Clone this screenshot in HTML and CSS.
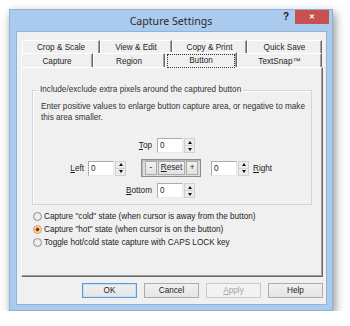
FILE: index.html
```html
<!DOCTYPE html>
<html>
<head>
<meta charset="utf-8">
<link rel="stylesheet" href="styles.css">
</head>
<body>
<div class="window">
  <div class="titlebar">
    <div></div>
    <div class="title">Capture Settings</div>
    <div class="controls">
      <div class="help">?</div>
      <div class="close">&#x2715;</div>
    </div>
  </div>
  <div class="client">
    <div class="tabs">
      <div class="tabrow row1">
        <div class="tab t78">Crop &amp; Scale</div>
        <div class="tab t72">View &amp; Edit</div>
        <div class="tab t75">Copy &amp; Print</div>
        <div class="tab t75">Quick Save</div>
      </div>
      <div class="tabrow row2">
        <div class="tab t72">Capture</div>
        <div class="tab t72">Region</div>
        <div class="tab t72 selected"><span class="focus">Button</span></div>
        <div class="tab t85">TextSnap&trade;</div>
      </div>
    </div>
    <div class="panel">
      <fieldset class="group">
        <legend>Include/exclude extra pixels around the captured button</legend>
        <p class="desc">Enter positive values to enlarge button capture area, or negative to make this area smaller.</p>
        <div class="spinrow toprow">
          <span class="lbl lbl-top"><u>T</u>op</span>
          <div class="spin"><div class="spin-box">0</div><div class="spin-btns"><span class="sb up"></span><span class="sb down"></span></div></div>
        </div>
        <div class="spinrow midrow">
          <span class="lbl lbl-left"><u>L</u>eft</span>
          <div class="spin"><div class="spin-box">0</div><div class="spin-btns"><span class="sb up"></span><span class="sb down"></span></div></div>
          <div class="resetgroup">
            <div class="rbtn rminus">-</div>
            <div class="rbtn rreset"><u>R</u>eset</div>
            <div class="rbtn rplus">+</div>
          </div>
          <div class="spin"><div class="spin-box">0</div><div class="spin-btns"><span class="sb up"></span><span class="sb down"></span></div></div>
          <span class="lbl lbl-right"><u>R</u>ight</span>
        </div>
        <div class="spinrow botrow">
          <span class="lbl lbl-top"><u>B</u>ottom</span>
          <div class="spin"><div class="spin-box">0</div><div class="spin-btns"><span class="sb up"></span><span class="sb down"></span></div></div>
        </div>
      </fieldset>
      <div class="radios">
        <div class="radio"><span class="circle"></span>Capture "cold" state (when cursor is away from the button)</div>
        <div class="radio"><span class="circle checked"></span>Capture "hot" state (when cursor is on the button)</div>
        <div class="radio"><span class="circle"></span>Toggle hot/cold state capture with CAPS LOCK key</div>
      </div>
    </div>
    <div class="buttons">
      <div class="btn default">OK</div>
      <div class="btn">Cancel</div>
      <div class="btn disabled"><u>A</u>pply</div>
      <div class="btn">Help</div>
    </div>
  </div>
</div>
</body>
</html>
```
FILE: styles.css
```css
html, body {
  margin: 0;
  background: #ffffff;
}
body {
  padding: 9px 0 0 9px;
  font-family: "Liberation Sans", Arial, sans-serif;
  font-size: 8.2px;
  color: #1e1e1e;
}
.window {
  width: 324px;
  height: 302px;
  box-sizing: border-box;
  border: 1px solid #8eb1d9;
  background: #aacbee;
  display: flex;
  flex-direction: column;
  box-shadow: 2px 4px 9px rgba(0, 0, 0, 0.45);
}
.titlebar {
  height: 21px;
  display: grid;
  grid-template-columns: 1fr auto 1fr;
  flex: none;
}
.title {
  font-family: "Noto Sans", "Liberation Sans", sans-serif;
  font-size: 10.6px;
  color: #2a2a2a;
  line-height: 21px;
  padding-top: 1px;
}
.controls {
  justify-self: end;
  display: flex;
  align-items: flex-start;
}
.help {
  font-weight: bold;
  font-size: 10px;
  color: #222;
  line-height: 14px;
  margin-right: 6px;
  margin-top: 0px;
}
.close {
  width: 34px;
  height: 14px;
  background: #c75050;
  color: #fff;
  font-size: 7px;
  font-weight: bold;
  text-align: center;
  line-height: 14px;
  margin-right: 3px;
}
.client {
  flex: 1;
  margin: 0 5px 5px 6px;
  background: #f0f0f0;
  border: 1px solid #8fb3df;
  display: flex;
  flex-direction: column;
}
.tabs {
  margin-top: 8px;
}
.tabrow {
  display: flex;
}
.row1 {
  margin-left: 5px;
  height: 13px;
}
.row2 {
  margin-left: 4px;
  height: 14px;
}
.tab {
  box-sizing: border-box;
  border-top: 1px solid #ffffff;
  border-left: 1px solid #ffffff;
  border-right: 1px solid #6a6a6a;
  box-shadow: inset -1px 0 0 #a0a0a0;
  background: #f0f0f0;
  text-align: center;
  line-height: 13px;
}
.row1 .tab { line-height: 12px; padding-top: 1px; }
.row2 .tab { line-height: 14px; padding-top: 1px; }
.t72 { width: 72px; }
.t75 { width: 75px; }
.t78 { width: 78px; }
.t85 { width: 85px; }
.tab.selected {
  position: relative;
  margin-top: -1px;
  height: 15px;
  padding: 1px 1px 0 1px;
  z-index: 2;
}
.focus {
  display: block;
  height: 12px;
  line-height: 11px;
  border: 1px dotted #333;
}
.panel {
  position: relative;
  margin-left: 4px;
  width: 302px;
  height: 210px;
  box-sizing: border-box;
  border-top: 1px solid #ffffff;
  border-left: 1px solid #ffffff;
  border-right: 1px solid #6a6a6a;
  border-bottom: 1px solid #6a6a6a;
  box-shadow: inset -1px -1px 0 #a0a0a0;
  display: flex;
  flex-direction: column;
}
.group {
  margin: 17px 10px 0 10px;
  padding: 0 0 5px 0;
  border: 1px solid #d5d5d5;
  box-shadow: inset 1px 1px 0 #fff;
  min-width: 0;
  height: 120px;
  box-sizing: border-box;
}
.group legend {
  margin-left: 5px;
  padding: 0 2px;
  line-height: 10px;
  color: #333;
}
.desc {
  margin: 6px 4px 0 8px;
  line-height: 11px;
  color: #333;
}
.spinrow {
  display: flex;
  align-items: center;
}
.toprow {
  margin-top: 15px;
  height: 15px;
}
.midrow {
  margin-top: 6px;
  height: 18px;
}
.botrow {
  margin-top: 6px;
  height: 15px;
}
.lbl-top {
  width: 119px;
  text-align: right;
  margin-right: 5px;
}
.lbl-left {
  width: 51px;
  text-align: right;
  margin-right: 4px;
}
.lbl-right {
  margin-left: 4px;
}
.spin {
  display: flex;
  height: 15px;
}
.spin-box {
  width: 26px;
  box-sizing: border-box;
  border: 1px solid #abadb3;
  border-right-color: #e3e9ef;
  border-bottom-color: #e3e9ef;
  background: #fff;
  padding-left: 2px;
  line-height: 13px;
}
.spin-btns {
  width: 11px;
  margin-left: 1px;
  display: flex;
  flex-direction: column;
}
.sb {
  flex: 1;
  box-sizing: border-box;
  border: 1px solid #d0d0d0;
  background: #ececec;
  display: flex;
  align-items: center;
  justify-content: center;
}
.sb + .sb { border-top: none; }
.sb::after {
  content: "";
  width: 0;
  height: 0;
  border-left: 2.5px solid transparent;
  border-right: 2.5px solid transparent;
}
.up::after { border-bottom: 3px solid #111; }
.down::after { border-top: 3px solid #111; }
.resetgroup {
  margin-left: 15px;
  margin-right: 10px;
  width: 60px;
  height: 18px;
  box-sizing: border-box;
  border: 1px solid #8c8c8c;
  box-shadow: inset 1px 1px 0 #b8b8b8;
  background: #dcdcdc;
  display: flex;
  align-items: center;
  padding: 0 2px 0 3px;
  gap: 1px;
}
.rbtn {
  height: 14px;
  box-sizing: border-box;
  border: 1px solid #acacac;
  background: linear-gradient(#f2f2f2, #e2e2e2);
  text-align: center;
  line-height: 12px;
}
.rminus { width: 12px; }
.rreset { width: 28px; }
.rplus { width: 12px; }
.radios {
  margin: 5px 0 0 11px;
}
.radio {
  height: 13px;
  display: flex;
  align-items: center;
  color: #222;
}
.circle {
  width: 9px;
  height: 9px;
  box-sizing: border-box;
  border-radius: 50%;
  border: 1px solid #8e8f8f;
  background: radial-gradient(circle, #f4f4f4 0, #e3e3e3 100%);
  margin-right: 2px;
  flex: none;
}
.circle.checked {
  border-color: #e59a52;
  background: radial-gradient(circle, #6b3a12 0, #8a4a18 1.6px, #f7c89a 2.2px, #fbe4cc 100%);
}
.buttons {
  margin-top: 6px;
  display: flex;
  justify-content: flex-end;
  gap: 7px;
  padding-right: 3px;
}
.btn {
  width: 55px;
  height: 15px;
  box-sizing: border-box;
  border: 1px solid #acacac;
  background: linear-gradient(#f0f0f0, #e5e5e5);
  text-align: center;
  line-height: 13px;
  color: #1e1e1e;
}
.btn.default {
  border-color: #5b9bd6;
  box-shadow: inset 0 0 0 1px #c7ddf2;
}
.btn.disabled {
  color: #a3a3a3;
  border-color: #c9c9c9;
  background: #f3f3f3;
}
```
